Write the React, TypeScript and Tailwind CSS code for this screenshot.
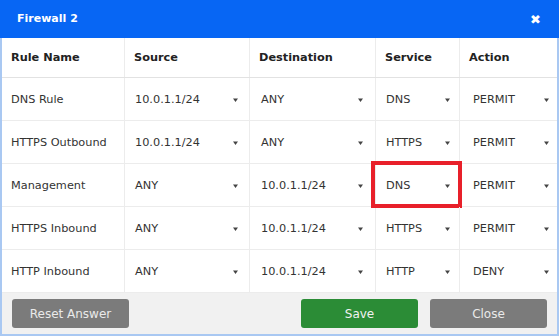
import React from "react";

const rows = [
  { name: "DNS Rule", src: "10.0.1.1/24", dst: "ANY", svc: "DNS", act: "PERMIT" },
  { name: "HTTPS Outbound", src: "10.0.1.1/24", dst: "ANY", svc: "HTTPS", act: "PERMIT" },
  { name: "Management", src: "ANY", dst: "10.0.1.1/24", svc: "DNS", act: "PERMIT", mark: true },
  { name: "HTTPS Inbound", src: "ANY", dst: "10.0.1.1/24", svc: "HTTPS", act: "PERMIT" },
  { name: "HTTP Inbound", src: "ANY", dst: "10.0.1.1/24", svc: "HTTP", act: "DENY" },
];

function Sel({ v, pl, pr }: { v: string; pl: string; pr: string }) {
  return (
    <div className={`flex h-full items-center justify-between pt-[2px] ${pl} ${pr}`}>
      <span>{v}</span>
      <svg width="5" height="4" viewBox="0 0 5 4" className="mr-[1px]">
        <path d="M0 0.5 L5 0.5 L2.5 4 Z" fill="#444" />
      </svg>
    </div>
  );
}

export default function App() {
  return (
    <div
      className="w-[559px] h-[336px] overflow-hidden bg-white text-[11.3px] text-[#333]"
      style={{ fontFamily: '"DejaVu Sans", Verdana, sans-serif' }}
    >
      <div className="flex h-[38px] items-center justify-between bg-[#0766f4] pl-[17px] pr-[18px] pt-[1px] text-white">
        <span className="text-[11px] font-bold">Firewall 2</span>
        <span className="text-[13px] font-bold">✖</span>
      </div>
      <div className="border-x-2 border-b-2 border-[#a9c8f2] h-[298px] flex flex-col">
        <div className="grid grid-cols-[123px_125px_126px_84px_1fr] h-[40px] border-b border-[#e2e2e2] font-bold text-[11.3px] text-[#222]">
          <div className="flex items-center pl-[9px] pt-[2px] border-r border-[#ececec]">Rule Name</div>
          <div className="flex items-center pl-[9px] pt-[2px] border-r border-[#ececec]">Source</div>
          <div className="flex items-center pl-[9px] pt-[2px] border-r border-[#ececec]">Destination</div>
          <div className="flex items-center pl-[9px] pt-[2px] border-r border-[#ececec]">Service</div>
          <div className="flex items-center pl-[9px] pt-[2px]">Action</div>
        </div>
        {rows.map((r, i) => (
          <div
            key={i}
            className="grid grid-cols-[123px_125px_126px_84px_1fr] h-[43px] border-b border-[#ececec]"
          >
            <div className="flex items-center pl-[9px] pt-[2px] border-r border-[#ececec]">{r.name}</div>
            <div className="border-r border-[#ececec]">
              <Sel v={r.src} pl="pl-[10px]" pr="pr-[10px]" />
            </div>
            <div className="border-r border-[#ececec]">
              <Sel v={r.dst} pl="pl-[11px]" pr="pr-[11px]" />
            </div>
            <div className="relative border-r border-[#ececec]">
              <Sel v={r.svc} pl="pl-[10px]" pr="pr-[8px]" />
              {r.mark && (
                <div className="absolute left-[-5px] right-[-3px] top-[-3px] bottom-[-2px] border-[4px] border-[#e8202a]" />
              )}
            </div>
            <div>
              <Sel v={r.act} pl="pl-[13px]" pr="pr-[7px]" />
            </div>
          </div>
        ))}
        <div className="flex flex-1 items-center justify-between bg-[#f1f1f1] px-[10px]">
          <button className="h-[29px] w-[117px] rounded-[3px] bg-[#7b7b7b] text-[12px] text-[#eaeaea]">
            Reset Answer
          </button>
          <div className="flex gap-[12px]">
            <button className="h-[29px] w-[117px] rounded-[3px] bg-[#2b8c36] text-[12px] text-[#f2f2f2]">
              Save
            </button>
            <button className="h-[29px] w-[117px] rounded-[3px] bg-[#7b7b7b] text-[12px] text-[#eaeaea]">
              Close
            </button>
          </div>
        </div>
      </div>
    </div>
  );
}
